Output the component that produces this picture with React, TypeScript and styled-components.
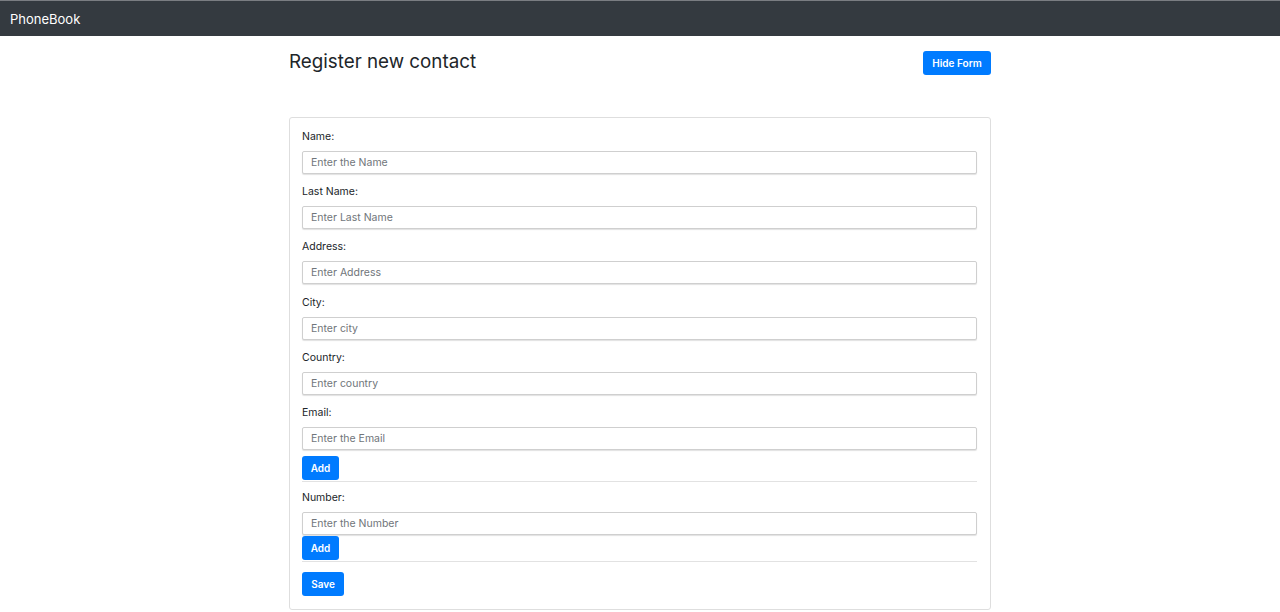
import React from 'react';
import styled, {createGlobalStyle} from 'styled-components';

const GlobalStyle = createGlobalStyle`
  body {
    margin: 0;
    background: #ffffff;
    font-family: Inter, "Noto Sans", "Liberation Sans", sans-serif;
    color: #212529;
  }
`;

const Navbar = styled.nav`
  height: 35px;
  border-top: 1px solid #7a7d82;
  background: #343a40;
  display: flex;
  align-items: center;
  padding: 0 10px;
`;

const Brand = styled.div`
  color: #ffffff;
  font-size: 13px;
`;

const Container = styled.main`
  width: 702px;
  margin: 0 auto;
`;

const Header = styled.div`
  display: flex;
  justify-content: space-between;
  align-items: flex-start;
  padding-top: 15px;
`;

const Title = styled.h2`
  margin: 0;
  font-size: 18.8px;
  line-height: 22px;
  font-weight: 400;
  color: #212529;
`;

const Button = styled.button<{$w: number}>`
  width: ${p => p.$w}px;
  height: 24px;
  padding: 0;
  border: none;
  border-radius: 3px;
  background: #007bff;
  color: #ffffff;
  font-family: inherit;
  font-size: 10px;
  font-weight: 600;
  cursor: pointer;
`;

const Card = styled.form`
  margin-top: 42px;
  border: 1px solid #dedede;
  border-radius: 3px;
  padding: 12px 13px 13px 12px;
`;

const Field = styled.div<{$gap: number}>`
  display: flex;
  flex-direction: column;
  margin-bottom: ${p => p.$gap}px;
`;

const Label = styled.label`
  font-size: 10.5px;
  line-height: 13px;
  color: #212529;
  margin-bottom: 8px;
`;

const Input = styled.input`
  box-sizing: border-box;
  height: 23px;
  width: 100%;
  border: 1px solid #cfcfcf;
  border-radius: 2px;
  box-shadow: 0 1px 1px rgba(0, 0, 0, 0.12);
  padding: 0 8px;
  font-family: inherit;
  font-size: 10.5px;
  color: #495057;
  outline: none;

  &::placeholder {
    color: #70757a;
  }
`;

const Divider = styled.hr<{$after: number}>`
  border: none;
  border-top: 1px solid #e2e2e2;
  margin: 1px 0 ${p => p.$after}px;
`;

const fields = [
    {label: 'Name:', placeholder: 'Enter the Name', gap: 11},
    {label: 'Last Name:', placeholder: 'Enter Last Name', gap: 11},
    {label: 'Address:', placeholder: 'Enter Address', gap: 12},
    {label: 'City:', placeholder: 'Enter city', gap: 11},
    {label: 'Country:', placeholder: 'Enter country', gap: 11},
];

const App = () => {
    return (
        <>
            <GlobalStyle />
            <Navbar>
                <Brand>PhoneBook</Brand>
            </Navbar>
            <Container>
                <Header>
                    <Title>Register new contact</Title>
                    <Button type="button" $w={68}>Hide Form</Button>
                </Header>
                <Card onSubmit={e => e.preventDefault()}>
                    {fields.map(f => (
                        <Field key={f.label} $gap={f.gap}>
                            <Label>{f.label}</Label>
                            <Input placeholder={f.placeholder} />
                        </Field>
                    ))}
                    <Field $gap={6}>
                        <Label>Email:</Label>
                        <Input placeholder="Enter the Email" />
                    </Field>
                    <Button type="button" $w={37}>Add</Button>
                    <Divider $after={9} />
                    <Field $gap={1}>
                        <Label>Number:</Label>
                        <Input placeholder="Enter the Number" />
                    </Field>
                    <Button type="button" $w={37}>Add</Button>
                    <Divider $after={10} />
                    <Button type="submit" $w={42}>Save</Button>
                </Card>
            </Container>
        </>
    );
};

export default App;
